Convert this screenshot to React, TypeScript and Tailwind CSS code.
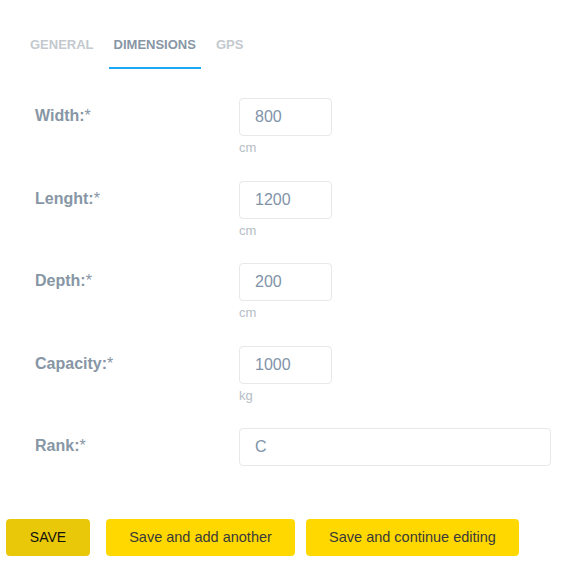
import React from "react";

const rows = [
  { label: "Width:", value: "800", unit: "cm" },
  { label: "Lenght:", value: "1200", unit: "cm" },
  { label: "Depth:", value: "200", unit: "cm" },
  { label: "Capacity:", value: "1000", unit: "kg" },
];

export default function App() {
  return (
    <div className="w-[568px] h-[582px] bg-white font-['Liberation_Sans',Arial,sans-serif]">
      <div className="flex gap-[10px] pl-[25px] pt-[36px]">
        <div className="px-[5px] pb-[13px] text-[13px] leading-[18px] font-bold text-[#c3c9cf] border-b-2 border-transparent">GENERAL</div>
        <div className="px-[5px] pb-[13px] text-[13px] leading-[18px] font-bold text-[#8796a5] border-b-2 border-[#1ba9f5]">DIMENSIONS</div>
        <div className="px-[5px] pb-[13px] text-[13px] leading-[18px] font-bold text-[#c3c9cf] border-b-2 border-transparent">GPS</div>
      </div>
      <div className="pl-[35px] pt-[29px] flex flex-col gap-[24.5px]">
        {rows.map((r) => (
          <div key={r.label} className="flex">
            <div className="w-[204px] pt-[8px] text-[16px] leading-[20px] font-bold text-[#8796a5]">
              {r.label}<span className="font-normal">*</span>
            </div>
            <div className="flex flex-col">
              <div className="w-[93px] h-[38px] border border-[#e6e8eb] rounded-[4px] pl-[15px] flex items-center text-[16px] text-[#7f93a8]">
                {r.value}
              </div>
              <div className="text-[13px] leading-[16px] mt-[4px] text-[#b5bdc5]">{r.unit}</div>
            </div>
          </div>
        ))}
        <div className="flex">
          <div className="w-[204px] pt-[8px] text-[16px] leading-[20px] font-bold text-[#8796a5]">
            Rank:<span className="font-normal">*</span>
          </div>
          <div className="w-[312px] h-[38px] border border-[#e6e8eb] rounded-[4px] pl-[15px] flex items-center text-[16px] text-[#7f93a8]">
            C
          </div>
        </div>
      </div>
      <div className="flex pl-[6px] mt-[53px]">
        <div className="w-[84px] h-[37px] rounded-[4px] bg-[#e9c80a] flex items-center justify-center text-[14px] text-[#111]">SAVE</div>
        <div className="ml-[16px] w-[189px] h-[37px] rounded-[4px] bg-[#ffd800] flex items-center justify-center text-[14.5px] text-[#3a3a3a]">Save and add another</div>
        <div className="ml-[11px] w-[213px] h-[37px] rounded-[4px] bg-[#ffd800] flex items-center justify-center text-[14.5px] text-[#3a3a3a]">Save and continue editing</div>
      </div>
    </div>
  );
}
